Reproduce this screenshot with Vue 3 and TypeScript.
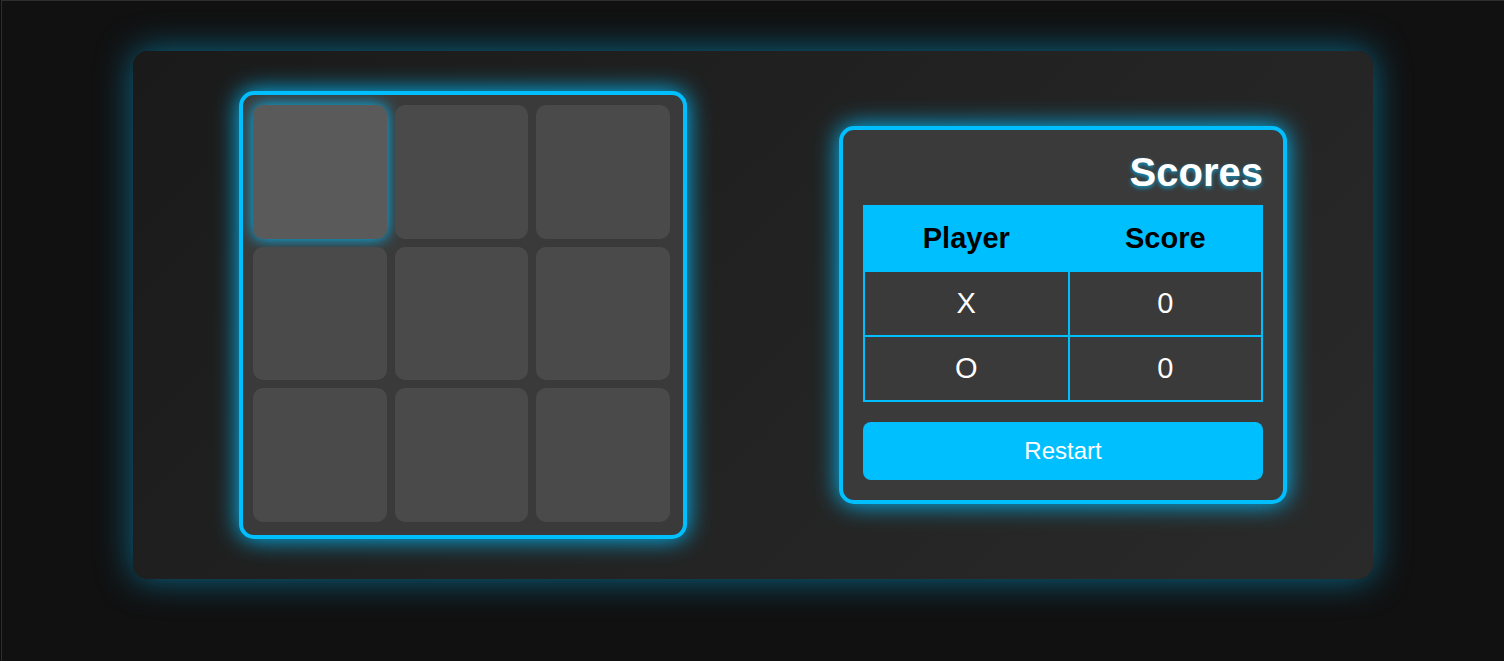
<script setup lang="ts">
import { reactive, ref } from 'vue'

type Mark = 'X' | 'O'

const cells = ref<(Mark | '')[]>(Array(9).fill(''))
const turn = ref<Mark>('X')
const active = ref(0)
const scores = reactive<Record<Mark, number>>({ X: 0, O: 0 })
const players: Mark[] = ['X', 'O']
const lines = [
  [0, 1, 2], [3, 4, 5], [6, 7, 8],
  [0, 3, 6], [1, 4, 7], [2, 5, 8],
  [0, 4, 8], [2, 4, 6],
]
const finished = ref(false)

function play(index: number) {
  if (cells.value[index] || finished.value) return
  const mark = turn.value
  cells.value[index] = mark
  if (lines.some(line => line.every(i => cells.value[i] === mark))) {
    scores[mark]++
    finished.value = true
  }
  turn.value = mark === 'X' ? 'O' : 'X'
}

function restart() {
  cells.value = Array(9).fill('')
  turn.value = 'X'
  finished.value = false
}
</script>

<template>
  <div class="page">
    <main class="game">
      <div class="board">
        <button
          v-for="(mark, i) in cells"
          :key="i"
          type="button"
          class="cell"
          :class="{ active: active === i }"
          :aria-label="`Cell ${i + 1}`"
          @mouseenter="active = i"
          @click="play(i)"
        >{{ mark }}</button>
      </div>
      <section class="panel" aria-labelledby="scores-title">
        <h2 id="scores-title">Scores</h2>
        <table>
          <thead>
            <tr>
              <th scope="col">Player</th>
              <th scope="col">Score</th>
            </tr>
          </thead>
          <tbody>
            <tr v-for="player in players" :key="player">
              <td>{{ player }}</td>
              <td>{{ scores[player] }}</td>
            </tr>
          </tbody>
        </table>
        <button type="button" class="restart" @click="restart">Restart</button>
      </section>
    </main>
  </div>
</template>

<style>
body {
  margin: 0;
  border-left: 1px solid #0c0c0c;
  background: #111111;
}
</style>

<style scoped>
* {
  box-sizing: border-box;
}

.page {
  min-height: 100vh;
  display: flex;
  justify-content: center;
  align-items: flex-start;
  padding: 50px 20px 20px;
  border-top: 1px solid #2e2e2e;
  border-left: 1px solid #2e2e2e;
  font-family: Arial, "Liberation Sans", sans-serif;
  color: #ffffff;
}

.game {
  width: 100%;
  max-width: 1240px;
  display: flex;
  flex-wrap: wrap;
  justify-content: space-around;
  align-items: center;
  padding: 20px;
  border-radius: 15px;
  background: linear-gradient(135deg, #1a1a1a, #2a2a2a);
  box-shadow: 0 0 35px rgba(0, 191, 255, 0.5);
}

.board {
  width: 448px;
  aspect-ratio: 1;
  margin: 20px;
  display: grid;
  grid-template: repeat(3, 1fr) / repeat(3, 1fr);
  gap: 8px;
  padding: 10px 13px 13px 10px;
  border: 4px solid #00bfff;
  border-radius: 15px;
  background: #3a3a3a;
  box-shadow: 0 0 25px #00bfff;
}

.cell {
  padding: 0;
  border: 0;
  border-radius: 10px;
  background: #4a4a4a;
  color: #ffffff;
  font: bold 64px Arial, "Liberation Sans", sans-serif;
  cursor: pointer;
}

.cell.active {
  background: #5a5a5a;
  box-shadow: 0 0 15px #00bfff;
}

.panel {
  width: 448px;
  display: flex;
  flex-direction: column;
  padding: 20px;
  border: 4px solid #00bfff;
  border-radius: 15px;
  background: #3a3a3a;
  box-shadow: 0 0 25px #00bfff;
}

h2 {
  margin: 0 0 10px;
  font-size: 40px;
  line-height: 45px;
  text-align: right;
  text-shadow: 0 2px 4px rgba(0, 191, 255, 0.7);
}

table {
  width: 100%;
  margin-bottom: 20px;
  border-collapse: collapse;
  font-size: 29px;
  line-height: 33px;
  text-align: center;
}

th,
td {
  padding: 15px;
  border: 2px solid #00bfff;
}

th {
  background: #00bfff;
  color: #000000;
}

.restart {
  padding: 15px;
  border: 0;
  border-radius: 8px;
  background: #00bfff;
  color: #ffffff;
  font: 24px/28px Arial, "Liberation Sans", sans-serif;
  cursor: pointer;
}
</style>
